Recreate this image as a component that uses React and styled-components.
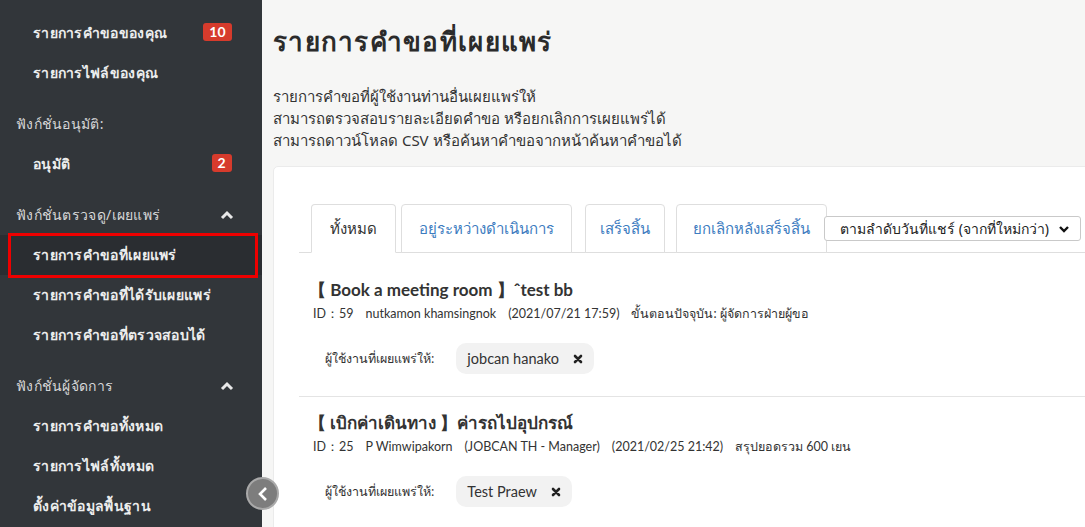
import React from "react";
import styled, { createGlobalStyle } from "styled-components";

const Global = createGlobalStyle`
  html, body { margin: 0; padding: 0; }
  body {
    font-family: "Noto Sans", "Open Sans", sans-serif;
    background: #f6f6f5;
    overflow: hidden;
  }
  * { box-sizing: border-box; }
`;

const Page = styled.div`
  display: flex;
  width: 1085px;
  height: 527px;
  overflow: hidden;
`;

const Sidebar = styled.nav`
  position: relative;
  width: 262px;
  flex-shrink: 0;
  background: #32363a;
  padding-top: 13px;
`;

const NavItem = styled.div`
  position: relative;
  height: 40px;
  display: flex;
  align-items: center;
  justify-content: space-between;
  padding: 0 30px 0 33px;
  font-size: 14px;
  font-weight: 600;
  letter-spacing: 0.3px;
  color: #eceded;
  background: ${(p) => (p.$active ? "#2a2d31" : "transparent")};

  ${(p) =>
    p.$active &&
    `
    &::after {
      content: "";
      position: absolute;
      left: 8px;
      right: 4px;
      top: -2px;
      bottom: -3px;
      border: 3px solid #ee0000;
    }
  `}
`;

const NavHeader = styled.div`
  height: 40px;
  margin-top: 11px;
  display: flex;
  align-items: center;
  justify-content: space-between;
  padding: 0 28px 0 16px;
  font-size: 14px;
  letter-spacing: 0.3px;
  color: #d6d7d8;
`;

const Badge = styled.span`
  background: #d63b2c;
  color: #fff;
  font-family: "Lato", sans-serif;
  font-weight: 700;
  font-size: 14px;
  line-height: 18px;
  padding: 0 6px;
  border-radius: 3px;
  margin-top: -3px;
`;

const Chevron = () => (
  <svg width="14" height="10" viewBox="0 0 14 10">
    <path d="M2 8 L7 3 L12 8" fill="none" stroke="#e8e8e8" strokeWidth="3" />
  </svg>
);

const Collapse = styled.button`
  position: absolute;
  left: 246px;
  top: 477px;
  width: 33px;
  height: 33px;
  border-radius: 50%;
  background: #7d7d7d;
  border: 2px solid #a9a9a9;
  display: flex;
  align-items: center;
  justify-content: center;
  padding: 0;
  z-index: 2;
`;

const Main = styled.main`
  flex: 1;
  padding-left: 11px;
  min-width: 0;
`;

const Title = styled.h1`
  margin: 23px 0 0;
  font-size: 26px;
  font-weight: 700;
  letter-spacing: 1.3px;
  color: #2b2b2b;
  line-height: 36px;
`;

const Desc = styled.div`
  margin-top: 26px;
  font-size: 15px;
  line-height: 22px;
  color: #333;
`;

const Card = styled.section`
  margin-top: 15px;
  margin-right: -20px;
  background: #fff;
  border: 1px solid #ebebeb;
  border-radius: 5px;
  padding: 37px 0 0 25px;
  height: 400px;
`;

const TabBar = styled.div`
  display: flex;
  align-items: flex-end;
  padding-left: 12px;
  border-bottom: 1px solid #dedede;
  height: 49px;
`;

const Tab = styled.div`
  height: 49px;
  margin-right: ${(p) => p.$gap}px;
  padding: 0 ${(p) => p.$pad}px;
  display: flex;
  align-items: center;
  font-size: 15px;
  color: ${(p) => (p.$active ? "#333" : "#3d7cc0")};
  background: #fff;
  border: 1px solid #dedede;
  border-bottom: ${(p) => (p.$active ? "1px solid #fff" : "1px solid #dedede")};
  border-radius: 4px 4px 0 0;
  margin-bottom: -1px;
`;

const Select = styled.div`
  align-self: center;
  margin-top: 1px;
  margin-left: -3px;
  width: 257px;
  height: 25px;
  border: 1px solid #c9c9c9;
  border-radius: 3px;
  display: flex;
  align-items: center;
  justify-content: space-between;
  padding: 0 10px 0 15px;
  font-size: 14px;
  color: #222;
  background: #fff;
  white-space: nowrap;
`;

const List = styled.div`
  padding-top: 11px;
`;

const Entry = styled.div`
  padding: 13px 0 22px 14px;
  border-bottom: 1px solid #e4e4e4;
`;

const EntryTitle = styled.div`
  font-family: "Lato", "Noto Sans", sans-serif;
  font-size: 17px;
  font-weight: 700;
  color: #333;
  line-height: 26px;
  text-indent: -4px;
`;

const Meta = styled.div`
  font-family: "Lato", "Noto Sans", sans-serif;
  font-size: 12.5px;
  color: #333;
  line-height: 22px;
  white-space: nowrap;
  span + span { margin-left: 12px; }
`;

const ShareRow = styled.div`
  display: flex;
  align-items: center;
  margin-top: 18px;
  padding-left: 12px;
  gap: 22px;
`;

const ShareLabel = styled.span`
  font-size: 12.5px;
  color: #333;
`;

const Chip = styled.span`
  display: inline-flex;
  align-items: center;
  gap: 14px;
  height: 31px;
  padding: 0 11px;
  background: #f2f2f2;
  border-radius: 10px;
  font-family: "Lato", "Noto Sans", sans-serif;
  font-size: 14.5px;
  color: #333;
`;

const X = () => (
  <svg width="10" height="10" viewBox="0 0 10 10">
    <path d="M2 2 L8 8 M8 2 L2 8" stroke="#222" strokeWidth="2.6" strokeLinecap="round" />
  </svg>
);

const nav = [
  { t: "item", label: "รายการคำขอของคุณ", badge: "10" },
  { t: "item", label: "รายการไฟล์ของคุณ" },
  { t: "head", label: "ฟังก์ชั่นอนุมัติ:" },
  { t: "item", label: "อนุมัติ", badge: "2" },
  { t: "head", label: "ฟังก์ชั่นตรวจดู/เผยแพร่", chevron: true },
  { t: "item", label: "รายการคำขอที่เผยแพร่", active: true },
  { t: "item", label: "รายการคำขอที่ได้รับเผยแพร่" },
  { t: "item", label: "รายการคำขอที่ตรวจสอบได้" },
  { t: "head", label: "ฟังก์ชั่นผู้จัดการ", chevron: true },
  { t: "item", label: "รายการคำขอทั้งหมด" },
  { t: "item", label: "รายการไฟล์ทั้งหมด" },
  { t: "item", label: "ตั้งค่าข้อมูลพื้นฐาน" },
];

const tabs = [
  { label: "ทั้งหมด", active: true, pad: 18, gap: 5 },
  { label: "อยู่ระหว่างดำเนินการ", pad: 17, gap: 13 },
  { label: "เสร็จสิ้น", pad: 14, gap: 11 },
  { label: "ยกเลิกหลังเสร็จสิ้น", pad: 16, gap: 0 },
];

const entries = [
  {
    title: "【 Book a meeting room 】ˆtest bb",
    meta: ["ID：59", "nutkamon khamsingnok", "(2021/07/21 17:59)", "ขั้นตอนปัจจุบัน: ผู้จัดการฝ่ายผู้ขอ"],
    user: "jobcan hanako",
  },
  {
    title: "【 เบิกค่าเดินทาง 】ค่ารถไปอุปกรณ์",
    meta: ["ID：25", "P Wimwipakorn", "(JOBCAN TH - Manager)", "(2021/02/25 21:42)", "สรุปยอดรวม 600 เยน"],
    user: "Test Praew",
  },
];

export default function App() {
  return (
    <Page>
      <Global />
      <Sidebar>
        {nav.map((n, i) =>
          n.t === "head" ? (
            <NavHeader key={i}>
              {n.label}
              {n.chevron && <Chevron />}
            </NavHeader>
          ) : (
            <NavItem key={i} $active={n.active}>
              {n.label}
              {n.badge && <Badge>{n.badge}</Badge>}
            </NavItem>
          )
        )}
        <Collapse>
          <svg width="14" height="16" viewBox="0 0 14 16">
            <path d="M10 2 L4 8 L10 14" fill="none" stroke="#fff" strokeWidth="2.6" />
          </svg>
        </Collapse>
      </Sidebar>
      <Main>
        <Title>รายการคำขอที่เผยแพร่</Title>
        <Desc>
          รายการคำขอที่ผู้ใช้งานท่านอื่นเผยแพร่ให้
          <br />
          สามารถตรวจสอบรายละเอียดคำขอ หรือยกเลิกการเผยแพร่ได้
          <br />
          สามารถดาวน์โหลด CSV หรือค้นหาคำขอจากหน้าค้นหาคำขอได้
        </Desc>
        <Card>
          <TabBar>
            {tabs.map((t) => (
              <Tab key={t.label} $active={t.active} $pad={t.pad} $gap={t.gap}>
                {t.label}
              </Tab>
            ))}
            <Select>
              ตามลำดับวันที่แชร์ (จากที่ใหม่กว่า)
              <svg width="12" height="8" viewBox="0 0 12 8">
                <path d="M2 2 L6 6 L10 2" fill="none" stroke="#111" strokeWidth="2.4" />
              </svg>
            </Select>
          </TabBar>
          <List>
            {entries.map((e) => (
              <Entry key={e.title}>
                <EntryTitle>{e.title}</EntryTitle>
                <Meta>
                  {e.meta.map((m) => (
                    <span key={m}>{m}</span>
                  ))}
                </Meta>
                <ShareRow>
                  <ShareLabel>ผู้ใช้งานที่เผยแพร่ให้:</ShareLabel>
                  <Chip>
                    {e.user}
                    <X />
                  </Chip>
                </ShareRow>
              </Entry>
            ))}
          </List>
        </Card>
      </Main>
    </Page>
  );
}
